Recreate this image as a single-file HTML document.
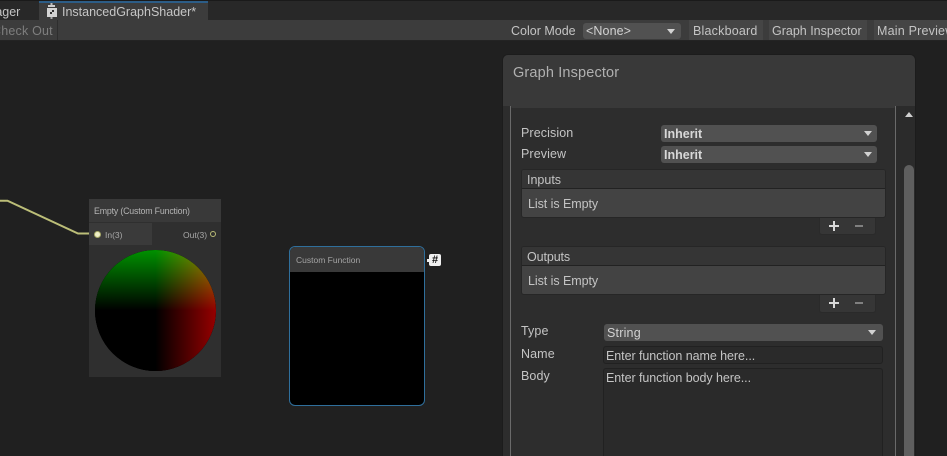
<!DOCTYPE html>
<html><head><meta charset="utf-8"><style>
html,body{margin:0;padding:0;background:#202020}
#r{position:relative;width:947px;height:456px;overflow:hidden;background:#202020;font-family:"Liberation Sans",sans-serif;font-size:12px;color:#c4c4c4}
#r div{position:absolute;box-sizing:border-box}
.t{white-space:nowrap;line-height:14px}
.dd{background:#515151;border-radius:3px}
.tri{width:0;height:0;border-left:4.5px solid transparent;border-right:4.5px solid transparent;border-top:5px solid #d2d2d2}
.btn{background:#454545;top:20px;height:20px}
.l{font-size:12.5px;letter-spacing:.1px}
.e{font-size:12.5px;letter-spacing:-.06px;color:#c4c4c4}
.n{font-size:8.5px;color:#a8a8a8}
.ft{background:#363636;border:1px solid #2a2a2a;border-top:0;border-radius:0 0 3px 3px}
</style></head><body><div id="r">
<!-- tab bar -->
<div style="left:0;top:0;width:947px;height:20px;background:#282828;border-top:1px solid #1a1a1a"></div>
<div style="left:39px;top:1px;width:169px;height:19px;background:#3c3c3c;border-top:2px solid #2c5d87"></div>
<div class="t" style="left:-29px;top:5px;font-size:12.5px">Manager</div>
<svg style="position:absolute;left:46px;top:3px" width="12" height="16"><rect x="4.500" y="0" width="2" height="2" fill="#bbb"/><rect x="2" y="2" width="7" height="2" fill="#ccc"/><rect x="1" y="5" width="10" height="9" fill="#d4d4d4"/><rect x="6" y="7" width="2" height="2" fill="#333"/><rect x="4" y="9" width="2" height="2" fill="#333"/><rect x="4.500" y="14" width="2" height="2" fill="#aaa"/></svg>
<div class="t" style="left:62px;top:5px;font-size:12.5px;color:#c6c6c6">InstancedGraphShader*</div>
<!-- toolbar -->
<div style="left:0;top:20px;width:947px;height:21px;background:#3c3c3c;border-bottom:1px solid #232323"></div>
<div style="left:0;top:20px;width:58px;height:20px;background:#3c3c3c;border-right:1px solid #2e2e2e"></div>
<div class="t" style="left:-8px;top:24px;font-size:12.5px;letter-spacing:.2px;color:#7e7e7e">Check Out</div>
<div class="t" style="left:511px;top:24px;font-size:12.5px">Color Mode</div>
<div class="dd" style="left:583px;top:23px;width:98px;height:16px"></div>
<div class="t" style="left:586px;top:24px;font-size:12.5px;letter-spacing:.1px;color:#d2d2d2">&lt;None&gt;</div>
<div class="tri" style="left:667px;top:29px"></div>
<div class="btn" style="left:689px;width:74px"></div>
<div class="t" style="left:693px;top:24px;font-size:12.5px;letter-spacing:.2px">Blackboard</div>
<div class="btn" style="left:769px;width:98px"></div>
<div class="t" style="left:772px;top:24px;font-size:12.5px">Graph Inspector</div>
<div class="btn" style="left:874px;width:73px"></div>
<div class="t" style="left:877px;top:24px;font-size:12.5px;letter-spacing:.2px">Main Preview</div>
<!-- wire -->
<svg style="position:absolute;left:0;top:190px" width="100" height="60"><path d="M0 10.700 H7.500 L78 43.500 H92" fill="none" stroke="#bcbe78" stroke-width="2"/></svg>
<!-- Empty node -->
<div style="left:89px;top:199px;width:132px;height:178px;background:#2f2f2f"></div>
<div style="left:89px;top:199px;width:132px;height:23px;background:#393939"></div>
<div class="t" style="left:94px;top:204px;font-size:8.8px;letter-spacing:-.17px;color:#b4b4b4">Empty (Custom Function)</div>
<div style="left:89px;top:223px;width:63px;height:22px;background:#3a3a3a"></div>
<div style="left:93.500px;top:230.500px;width:7px;height:7px;border-radius:50%;background:#f0f0c8;border:1.500px solid #a9ab68"></div>
<div class="t n" style="left:105px;top:228px">In(3)</div>
<div class="t n" style="left:183px;top:228px">Out(3)</div>
<div style="left:210px;top:231px;width:6px;height:6px;border-radius:50%;border:1.200px solid #b9bb76"></div>
<!-- sphere -->
<div style="left:95px;top:250px;width:121px;height:121px;border-radius:50%;overflow:hidden;background:#000;isolation:isolate">
<div style="left:0;top:0;width:121px;height:121px;background:linear-gradient(90deg,#000 50%,rgb(150,0,0) 100%)"></div>
<div style="left:0;top:0;width:121px;height:121px;background:linear-gradient(180deg,rgb(0,145,0) 0,#000 50%);mix-blend-mode:screen"></div>
</div>
<!-- Custom function node -->
<div style="left:289px;top:246px;width:136px;height:160px;background:#000;border:1.500px solid #2f6f9c;border-radius:6px;overflow:hidden">
<div style="left:0;top:0;width:134px;height:25px;background:#393939"></div>
</div>
<div class="t" style="left:296px;top:253px;font-size:8.5px;color:#a4a4a4">Custom Function</div>
<div style="left:429px;top:254px;width:12px;height:12px;background:#f0f0f0;border-radius:2px"></div>
<div style="left:427px;top:258.500px;width:2px;height:3px;background:#eee"></div>
<div class="t" style="left:430px;top:253px;width:10px;text-align:center;font-size:11px;font-weight:bold;color:#111">#</div>
<!-- inspector panel -->
<div style="left:503px;top:55px;width:412px;height:401px;background:#2d2d2d;border-radius:5px 5px 0 0;overflow:hidden;box-shadow:0 0 0 1px #1c1c1c">
<div style="left:0;top:0;width:412px;height:51px;background:#393939"></div>
<div style="left:7px;top:51px;width:1px;height:350px;background:#6a6a6a"></div>
<div style="left:392px;top:51px;width:1px;height:350px;background:#6a6a6a"></div>
<div style="left:393px;top:51px;width:19px;height:350px;background:#2b2b2b"></div>
<div style="left:401px;top:110px;width:10px;height:291px;background:#5f5f5f;border-radius:5px 5px 0 0"></div>
<div style="left:8px;top:51px;width:384px;height:2px;background:#393939;border-radius:0 0 3px 3px"></div>
</div>
<div style="left:905px;top:112px;width:0;height:0;border-left:4px solid transparent;border-right:4px solid transparent;border-bottom:5px solid #d0d0d0"></div>
<div class="t" style="left:513px;top:66px;font-size:14.5px;letter-spacing:.15px;color:#b0b0b0">Graph Inspector</div>
<!-- precision / preview -->
<div class="t l" style="left:521px;top:126px">Precision</div>
<div class="dd" style="left:661px;top:125px;width:216px;height:17px"></div>
<div class="t" style="left:664px;top:127px;font-size:12.5px;font-weight:bold;color:#d8d8d8">Inherit</div>
<div class="tri" style="left:864px;top:131px"></div>
<div class="t l" style="left:521px;top:147px">Preview</div>
<div class="dd" style="left:661px;top:146px;width:216px;height:17px"></div>
<div class="t" style="left:664px;top:148px;font-size:12.5px;font-weight:bold;color:#d8d8d8">Inherit</div>
<div class="tri" style="left:864px;top:152px"></div>
<!-- Inputs -->
<div class="ft" style="left:819px;top:216px;width:57px;height:19px"></div>
<div style="left:521px;top:169px;width:365px;height:49px;background:#434343;border:1px solid #262626;border-radius:3px;overflow:hidden">
<div style="left:0;top:0;width:363px;height:19px;background:#353535;border-bottom:1px solid #222"></div>
</div>
<div class="t" style="left:527px;top:173px;font-size:12.5px">Inputs</div>
<div class="t e" style="left:528px;top:197px">List is Empty</div>
<div style="left:829px;top:225px;width:10px;height:2px;background:#d8d8d8"></div>
<div style="left:833px;top:221px;width:2px;height:10px;background:#d8d8d8"></div>
<div style="left:855px;top:225px;width:8px;height:2px;background:#808080"></div>
<!-- Outputs -->
<div class="ft" style="left:819px;top:293px;width:57px;height:20px"></div>
<div style="left:521px;top:246px;width:365px;height:49px;background:#434343;border:1px solid #262626;border-radius:3px;overflow:hidden">
<div style="left:0;top:0;width:363px;height:19px;background:#353535;border-bottom:1px solid #222"></div>
</div>
<div class="t" style="left:527px;top:250px;font-size:12.5px;letter-spacing:-.1px">Outputs</div>
<div class="t e" style="left:528px;top:274px">List is Empty</div>
<div style="left:829px;top:302px;width:10px;height:2px;background:#d8d8d8"></div>
<div style="left:833px;top:298px;width:2px;height:10px;background:#d8d8d8"></div>
<div style="left:855px;top:302px;width:8px;height:2px;background:#808080"></div>
<!-- Type -->
<div class="t l" style="left:521px;top:324px">Type</div>
<div class="dd" style="left:604px;top:324px;width:279px;height:17px"></div>
<div class="t" style="left:607px;top:326px;font-size:12.5px;letter-spacing:.2px;color:#d2d2d2">String</div>
<div class="tri" style="left:868px;top:330px"></div>
<!-- Name -->
<div class="t l" style="left:521px;top:347px">Name</div>
<div style="left:603px;top:346px;width:280px;height:18px;background:#2a2a2a;border:1px solid #212121;border-radius:3px"></div>
<div class="t e" style="left:606px;top:349px">Enter function name here...</div>
<!-- Body -->
<div class="t l" style="left:521px;top:369px">Body</div>
<div style="left:603px;top:368px;width:280px;height:100px;background:#2a2a2a;border:1px solid #212121;border-radius:3px"></div>
<div class="t e" style="left:606px;top:371px">Enter function body here...</div>
</div></body></html>
